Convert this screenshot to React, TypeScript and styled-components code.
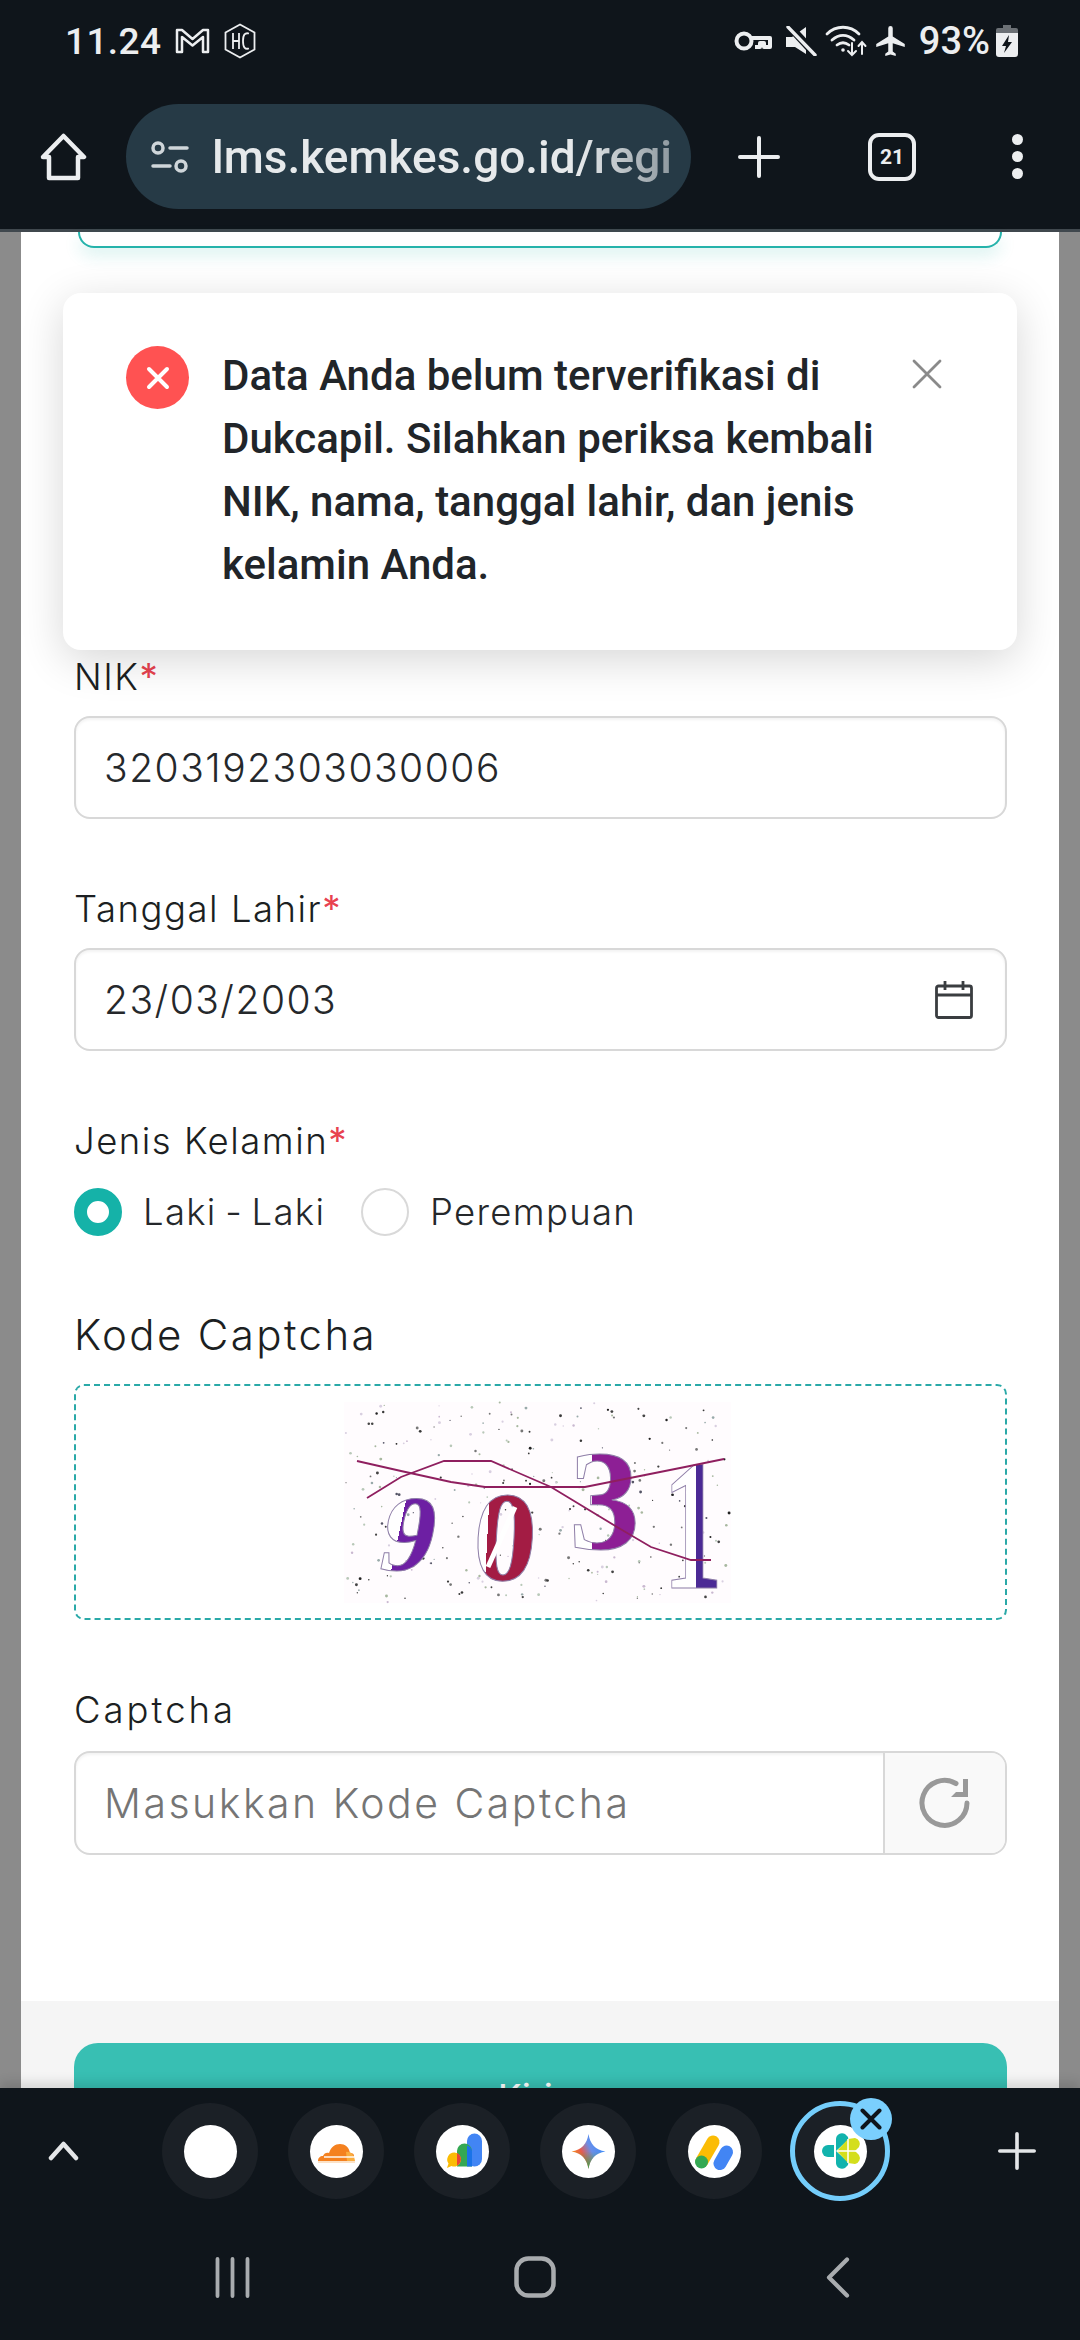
import React from 'react';
import styled, { createGlobalStyle } from 'styled-components';

const GlobalStyle = createGlobalStyle`
  html, body { margin: 0; padding: 0; background: #0f151b; }
  * { box-sizing: border-box; }
`;

const Screen = styled.div`
  width: 1080px;
  height: 2340px;
  display: flex;
  flex-direction: column;
  overflow: hidden;
  font-family: Roboto, "Liberation Sans", sans-serif;
  background: #0f151b;
`;

const TopBar = styled.header`
  height: 232px;
  flex: none;
  background: #0f151b;
  border-bottom: 3px solid #40484e;
  display: flex;
  flex-direction: column;
  color: #eceef0;
`;

const StatusBar = styled.div`
  height: 82px;
  padding: 0 62px 0 65px;
  display: flex;
  align-items: center;
`;

const Clock = styled.span`
  font-size: 37px;
  font-weight: 500;
  letter-spacing: 0.4px;
  margin-right: 14px;
`;

const StatusRight = styled.div`
  margin-left: auto;
  display: flex;
  align-items: center;
  gap: 8px;
`;

const Percent = styled.span`
  font-size: 38px;
  font-weight: 500;
  margin: 0 0 0 5px;
`;

const UrlRow = styled.div`
  height: 105px;
  margin-top: 22px;
  display: flex;
  align-items: center;
  padding-left: 40px;
`;

const UrlPill = styled.div`
  width: 565px;
  height: 105px;
  margin: 0 47px 0 39px;
  border-radius: 53px;
  background: #263a46;
  display: flex;
  align-items: center;
  padding: 0 20px 0 24px;
`;

const UrlText = styled.span`
  margin-left: 22px;
  font-size: 46px;
  font-weight: 500;
  color: #e6e9eb;
  white-space: nowrap;
  overflow: hidden;
  flex: 1;
  -webkit-mask-image: linear-gradient(90deg, #000 80%, rgba(0, 0, 0, 0.55) 100%);
  mask-image: linear-gradient(90deg, #000 80%, rgba(0, 0, 0, 0.55) 100%);
`;

const TabCount = styled.div`
  width: 48px;
  height: 48px;
  margin: 0 88px;
  border: 4px solid #eceef0;
  border-radius: 11px;
  display: flex;
  align-items: center;
  justify-content: center;
  font-size: 21px;
  font-weight: 700;
`;

const Dots = styled.div`
  display: flex;
  flex-direction: column;
  gap: 6px;
  margin-left: 8px;
  i {
    display: block;
    width: 11px;
    height: 11px;
    border-radius: 50%;
    background: #eceef0;
  }
`;

const Page = styled.main`
  flex: 1;
  min-height: 0;
  position: relative;
  background: #8b8b8b;
  padding: 0 21px;
`;

const Panel = styled.div`
  height: 100%;
  background: #fff;
  display: flex;
  flex-direction: column;
  color: #212529;
  font-family: Inter, "Open Sans", sans-serif;
`;

const PrevCard = styled.div`
  height: 16px;
  margin: 0 57px;
  border: 2px solid #26b3ab;
  border-top: none;
  border-radius: 0 0 30px 30px;
  box-shadow: 0 8px 16px rgba(38, 179, 171, 0.16);
`;

const Form = styled.div`
  flex: 1;
  padding: 0 52px 0 53px;
  display: flex;
  flex-direction: column;
`;

const Label = styled.div<{ $top: number; $spacing?: number }>`
  height: 50px;
  line-height: 50px;
  margin-top: ${(p) => p.$top}px;
  font-size: 36.5px;
  font-weight: 300;
  color: #1c1f22;
  letter-spacing: ${(p) => p.$spacing ?? 1.5}px;
  b {
    font-weight: 400;
    color: #e8424f;
  }
`;

const SectionLabel = styled(Label)`
  font-size: 42px;
`;

const Field = styled.div`
  height: 103px;
  margin-top: 14px;
  border: 2px solid #d8d8d8;
  border-radius: 16px;
  padding: 0 32px 0 28px;
  display: flex;
  align-items: center;
  justify-content: space-between;
  font-size: 39px;
  font-weight: 300;
  color: #25282b;
  letter-spacing: 1.5px;
  box-shadow: inset 0 2px 3px rgba(0, 0, 0, 0.05);
`;

const RadioRow = styled.div`
  height: 48px;
  margin-top: 22px;
  display: flex;
  align-items: center;
`;

const Radio = styled.span<{ $on?: boolean }>`
  width: 48px;
  height: 48px;
  flex: none;
  border-radius: 50%;
  background: #fff;
  border: ${(p) => (p.$on ? '13.5px solid #15b2a8' : '2px solid #d9d9d9')};
`;

const RadioText = styled.span<{ $width: number }>`
  width: ${(p) => p.$width}px;
  margin-left: 21px;
  font-size: 36.5px;
  font-weight: 300;
  letter-spacing: 1.3px;
  word-spacing: -3px;
  color: #25282b;
  white-space: nowrap;
`;

const CaptchaBox = styled.div`
  height: 236px;
  margin-top: 24px;
  border: 2px dashed #2aa9a8;
  border-radius: 10px;
  display: flex;
  align-items: center;
  justify-content: center;
  svg {
    display: block;
    margin-left: -6px;
  }
`;

const InputGroup = styled.div`
  height: 104px;
  margin-top: 16px;
  border: 2px solid #d8d8d8;
  border-radius: 16px;
  display: flex;
  overflow: hidden;
  box-shadow: inset 0 2px 3px rgba(0, 0, 0, 0.05);
`;

const Placeholder = styled.div`
  flex: 1;
  padding-left: 28px;
  display: flex;
  align-items: center;
  font-size: 41px;
  font-weight: 300;
  letter-spacing: 2.5px;
  color: #757575;
`;

const Addon = styled.div`
  width: 122px;
  border-left: 2px solid #d8d8d8;
  background: #f9f9f9;
  display: flex;
  align-items: center;
  justify-content: center;
`;

const Footer = styled.div`
  height: 87px;
  flex: none;
  background: #f5f5f5;
  padding: 42px 52px 0 53px;
  overflow: hidden;
`;

const SubmitButton = styled.div`
  height: 106px;
  border-radius: 24px;
  background: #38bfb3;
  color: #fff;
  display: flex;
  align-items: center;
  justify-content: center;
  font-size: 34px;
  font-weight: 500;
`;

const Toast = styled.div`
  position: absolute;
  top: 61px;
  left: 63px;
  width: 954px;
  height: 357px;
  background: #fff;
  border-radius: 18px;
  box-shadow: 0 10px 44px rgba(0, 0, 0, 0.16);
  display: flex;
  align-items: flex-start;
  padding: 51px 0 0 63px;
  font-family: Roboto, "Liberation Sans", sans-serif;
`;

const ToastBadge = styled.span`
  width: 63px;
  height: 63px;
  flex: none;
  margin-top: 2px;
  border-radius: 50%;
  background: #ff5252;
  display: flex;
  align-items: center;
  justify-content: center;
`;

const ToastText = styled.p`
  width: 690px;
  margin: 0 0 0 33px;
  font-size: 42px;
  line-height: 63px;
  font-weight: 500;
  color: #212529;
`;

const ToastClose = styled.span`
  margin-top: 15px;
  flex: none;
  line-height: 0;
`;

const BottomBar = styled.footer`
  height: 252px;
  flex: none;
  background: #0f151b;
  position: relative;
  box-shadow: 0 -6px 10px rgba(0, 0, 0, 0.12);
`;

const TabRow = styled.div`
  height: 126px;
  padding-left: 48px;
  display: flex;
  align-items: center;
`;

const TabList = styled.div`
  margin: 0 110px 0 83px;
  display: flex;
  gap: 30px;
`;

const TabBubble = styled.div<{ $active?: boolean }>`
  width: 96px;
  height: 96px;
  border-radius: 50%;
  background: #1b2026;
  display: flex;
  align-items: center;
  justify-content: center;
  position: relative;
  outline: ${(p) => (p.$active ? '5px solid #74cdfb' : 'none')};
  outline-offset: -3px;
`;

const Favicon = styled.div`
  width: 53px;
  height: 53px;
  border-radius: 50%;
  background: #fff;
  svg {
    display: block;
  }
`;

const CloseBadge = styled.span`
  position: absolute;
  top: -5px;
  right: -4px;
  width: 42px;
  height: 42px;
  border-radius: 50%;
  background: #7acffd;
  display: flex;
  align-items: center;
  justify-content: center;
`;

const NavRow = styled.div`
  height: 126px;
  padding: 0 0 0 215px;
  display: flex;
  align-items: center;
  svg {
    display: block;
  }
`;

const NavHome = styled.span`
  margin: 0 270px 0 264px;
`;

const Required = () => <b>*</b>;

// status bar glyphs
const MailIcon = () => (
  <svg width="35" height="26" viewBox="0 0 35 26" fill="none" stroke="#eceef0" strokeWidth="2.5" strokeLinejoin="round">
    <path d="M2 2h5l10.5 9L28 2h5v22h-5V9l-10.5 8.500L7 9v15H2z" />
  </svg>
);

const HexIcon = () => (
  <svg width="32" height="36" viewBox="0 0 32 36" fill="none" stroke="#eceef0" strokeWidth="1.800" style={{ marginLeft: 14 }}>
    <path d="M16 1.500 30.500 9.500v17L16 34.500 1.500 26.500v-17z" />
    <path d="M9 10v16M15 10v16M9 18h6M25 10.500c-4-1-6 1-6 7.500s2 8.500 6 7.500" />
  </svg>
);

const KeyIcon = () => (
  <svg width="38" height="22" viewBox="0 0 38 22" fill="none" stroke="#eceef0" strokeWidth="4">
    <circle cx="10" cy="11" r="7.500" />
    <path d="M17 8h19v9h-6v-4h-4v4h-5" strokeLinejoin="round" fill="none" />
  </svg>
);

const MuteIcon = () => (
  <svg width="31" height="30" viewBox="0 0 31 30" style={{ marginLeft: 6 }}>
    <path d="M0 11h6L20 1v27L9 21H0z" fill="#eceef0" />
    <path d="M4 1l26 28" stroke="#0f151b" strokeWidth="8" />
    <path d="M2 1l27 28" stroke="#eceef0" strokeWidth="3.400" strokeLinecap="round" />
  </svg>
);

const WifiIcon = () => (
  <svg width="42" height="32" viewBox="0 0 42 32" fill="none" stroke="#eceef0" strokeWidth="2.800" strokeLinecap="round">
    <path d="M2 9C11 0 25 0 34 9M7 15c7-6 15-6 22 0M12 20c4-3 8-3 12 0" />
    <circle cx="18" cy="25" r="1.800" fill="#eceef0" stroke="none" />
    <path d="M27 18v12M23 26l4 4 4-4M37 29V17M33.500 21l3.500-4 3.500 4" strokeWidth="2" />
  </svg>
);

const PlaneIcon = () => (
  <svg width="31" height="30" viewBox="2 2 20 20" fill="#eceef0">
    <path d="M21 16v-2l-8-5V3.500a1.500 1.500 0 0 0-3 0V9l-8 5v2l8-2.500V19l-2 1.500V22l3.500-1 3.500 1v-1.500L13 19v-5.500z" transform="translate(0.500 0)" />
  </svg>
);

const BatteryIcon = () => (
  <svg width="22" height="32" viewBox="0 0 22 32" style={{ marginLeft: -2 }}>
    <path d="M7 0h8v3H7z" fill="#6b7075" />
    <rect y="3" width="22" height="7" rx="2" fill="#6b7075" />
    <path d="M0 8h22v21a3 3 0 0 1-3 3H3a3 3 0 0 1-3-3z" fill="#eceef0" />
    <path d="M13 10 6 21h4l-2 7 8-11h-4z" fill="#0f151b" />
  </svg>
);

// browser chrome glyphs
const HomeIcon = () => (
  <svg width="47" height="48" viewBox="0 0 47 48" fill="none" stroke="#eceef0" strokeWidth="4.500" strokeLinejoin="round">
    <path d="M23.500 3 44 24h-6v21H9V24H3z" />
  </svg>
);

const TuneIcon = () => (
  <svg width="40" height="34" viewBox="0 0 40 34" fill="none" stroke="#cfd6da" strokeWidth="3.500" strokeLinecap="round">
    <circle cx="8" cy="8" r="5" />
    <path d="M20 8h17M3 26h17" />
    <circle cx="31" cy="26" r="5" />
  </svg>
);

const PlusIcon = ({ size, color }: { size: number; color: string }) => (
  <svg width={size} height={size} viewBox="0 0 42 42" fill="none" stroke={color} strokeWidth="4" strokeLinecap="round">
    <path d="M21 2v38M2 21h38" />
  </svg>
);

const CalendarIcon = () => (
  <svg width="38" height="38" viewBox="0 0 38 38" fill="none" stroke="#3a3d40" strokeWidth="2.800">
    <rect x="1.500" y="5" width="35" height="31.500" rx="2" />
    <path d="M1.500 14h35M10 0v9M28 0v9" />
  </svg>
);

const RefreshIcon = () => (
  <svg width="54" height="54" viewBox="0 0 54 54" fill="none" stroke="#999" strokeWidth="5">
    <path d="M49 27A22.500 22.500 0 1 1 38 7.500" strokeLinecap="round" />
    <path d="M50 3v18H33l5-5h7V3z" fill="#999" stroke="none" />
  </svg>
);

// captcha picture, digits stay real text
function noiseDots() {
  const dots: { x: number; y: number; r: number; c: string }[] = [];
  const colors = ['#3a3a3a', '#222', '#777', '#9aa', '#556', '#a8b8a0', '#444', '#c9b8d0', '#d8cfe0', '#b8c8b8'];
  let s = 90317;
  const next = () => {
    s = (s * 1103515245 + 12345) & 0x7fffffff;
    return s / 0x7fffffff;
  };
  for (let i = 0; i < 300; i++) {
    dots.push({
      x: next() * 387,
      y: next() * 201,
      r: 0.6 + next() * 0.9,
      c: colors[Math.floor(next() * colors.length)],
    });
  }
  return dots;
}

const HalfFill = ({ id, color, cut }: { id: string; color: string; cut: number }) => (
  <linearGradient id={id} x1="0" y1="0" x2="1" y2="0">
    <stop offset={cut} stopColor="#fff" />
    <stop offset={cut} stopColor={color} />
  </linearGradient>
);

const CaptchaPicture = () => (
  <svg width="387" height="201" viewBox="0 0 387 201" overflow="visible">
    <defs>
      <HalfFill id="cap9" color="#6d1fa3" cut={0.3} />
      <HalfFill id="cap0" color="#a31c44" cut={0.22} />
      <HalfFill id="cap3" color="#8d1f95" cut={0.32} />
      <HalfFill id="cap1" color="#4b2a95" cut={0.56} />
    </defs>
    <rect width="387" height="201" fill="#fffcfe" />
    {noiseDots().map((d, i) => (
      <circle key={i} cx={d.x} cy={d.y} r={d.r} fill={d.c} />
    ))}
    <g fontFamily="'Liberation Serif', serif" fontWeight="700" stroke="#8f7fa8" strokeWidth="1">
      <text x="0" y="0" fontSize="108" fill="url(#cap9)" transform="translate(31 168) skewX(-12)">9</text>
      <text x="0" y="0" fontSize="128" fill="url(#cap0)" transform="translate(127 178) skewX(-3)">0</text>
      <text x="0" y="0" fontSize="142" fill="url(#cap3)" transform="translate(225 147)">3</text>
      <text x="0" y="0" fontSize="170" fill="url(#cap1)" transform="translate(318 186) scale(0.72 1.100)">1</text>
    </g>
    <path d="M144 165 171 105" stroke="#fff" strokeWidth="5" />
    <polyline
      points="13,59 57,69 107,80 141,85 241,85 291,75 341,65 380,57"
      fill="none"
      stroke="#8f1f5f"
      strokeWidth="1.800"
    />
    <polyline
      points="23,96 57,75 100,59 147,59 207,85 273,125 307,145 347,158 367,158"
      fill="none"
      stroke="#8f1f5f"
      strokeWidth="1.800"
    />
  </svg>
);

// tab strip favicons
const CloudflareMark = () => (
  <svg width="53" height="53" viewBox="0 0 53 53">
    <path d="M8 36c0-3 2-5 5-5 1-3 4-4 6-3 2-6 6-9 11-9 5 0 9 3 10 9 3 0 4 1 4 3 0 2 0 3-1 5z" fill="#f48120" />
    <path d="M36 27c4-1 8 2 9 9H37z" fill="#faad3f" />
    <path d="M14 32h30" stroke="#fff" strokeWidth="1.400" />
    <path d="M8 37h37" stroke="#f9c58f" strokeWidth="1.200" />
  </svg>
);

const AdsMark = () => (
  <svg width="53" height="53" viewBox="0 0 53 53">
    <rect x="31" y="8.500" width="15" height="33" rx="7.500" fill="#4285f4" />
    <path d="M21 26a7.500 7.500 0 0 1 15 0v15.500H21z" fill="#34a853" />
    <path d="M31 20.500a7.500 7.500 0 0 1 5 5.500v15.500h-5z" fill="#1a73e8" />
    <path d="M18.500 27.500a7 7 0 1 1-3 13.500L11 43l1.500-4.500a7 7 0 0 1 6-11z" fill="#fbbc04" />
    <path d="M21 28a7 7 0 0 1 0 12.500z" fill="#ea4335" />
  </svg>
);

const GeminiMark = () => (
  <svg width="53" height="53" viewBox="0 0 53 53">
    <defs>
      <linearGradient id="gem" x1="0" y1="0.800" x2="1" y2="0.300">
        <stop offset="0" stopColor="#f9ab00" />
        <stop offset="0.350" stopColor="#ea5a4c" />
        <stop offset="0.600" stopColor="#6a8ee8" />
        <stop offset="1" stopColor="#2f8cff" />
      </linearGradient>
      <linearGradient id="gemb" x1="0" y1="0" x2="0" y2="1">
        <stop offset="0.500" stopColor="#34a853" stopOpacity="0" />
        <stop offset="1" stopColor="#34a853" />
      </linearGradient>
    </defs>
    <path d="M26.500 9c1.500 10 7 16 17 17.500-10 1.500-15.500 7.500-17 17.500-1.500-10-7-16-17-17.500 10-1.500 15.500-7.500 17-17.500z" fill="url(#gem)" />
    <path d="M26.500 9c1.500 10 7 16 17 17.500-10 1.500-15.500 7.500-17 17.500-1.500-10-7-16-17-17.500 10-1.500 15.500-7.500 17-17.500z" fill="url(#gemb)" />
  </svg>
);

const AdsenseMark = () => (
  <svg width="53" height="53" viewBox="0 0 53 53" fill="none" strokeLinecap="round">
    <path d="M38.500 27 32 38.500" stroke="#4285f4" strokeWidth="13" />
    <path d="M25 17 14 36" stroke="#fbbc04" strokeWidth="13" />
    <circle cx="13.500" cy="37" r="6.500" fill="#34a853" />
  </svg>
);

const SehatMark = () => (
  <svg width="53" height="53" viewBox="0 0 53 53">
    <path d="M20 20h-6a6 6 0 0 0 0 12h6z" fill="#12b3ad" />
    <path d="M22 26V14a6 6 0 0 1 9-5l3 3a6 6 0 0 1 0 3z" fill="#12b3ad" />
    <path d="M22 26v12a6 6 0 0 0 9 5l3-3a6 6 0 0 0 0-3z" fill="#12b3ad" />
    <path d="M23 26l11-12 7-1a6 6 0 0 1 4 9l-4 4 4 4a6 6 0 0 1-4 9l-7-1z" fill="#d4de1c" />
    <path d="M23 26h20M34 14v24" stroke="#fff" strokeWidth="1.500" />
  </svg>
);

export default function App() {
  return (
    <Screen>
      <GlobalStyle />
      <TopBar>
        <StatusBar>
          <Clock>11.24</Clock>
          <MailIcon />
          <HexIcon />
          <StatusRight>
            <KeyIcon />
            <MuteIcon />
            <WifiIcon />
            <PlaneIcon />
            <Percent>93%</Percent>
            <BatteryIcon />
          </StatusRight>
        </StatusBar>
        <UrlRow>
          <HomeIcon />
          <UrlPill>
            <TuneIcon />
            <UrlText>lms.kemkes.go.id/regi</UrlText>
          </UrlPill>
          <PlusIcon size={42} color="#eceef0" />
          <TabCount>21</TabCount>
          <Dots>
            <i />
            <i />
            <i />
          </Dots>
        </UrlRow>
      </TopBar>

      <Page>
        <Panel>
          <PrevCard />
          <Form>
            <Label $top={404}>
              NIK
              <Required />
            </Label>
            <Field>3203192303030006</Field>
            <Label $top={65}>
              Tanggal Lahir
              <Required />
            </Label>
            <Field>
              23/03/2003
              <CalendarIcon />
            </Field>
            <Label $top={65}>
              Jenis Kelamin
              <Required />
            </Label>
            <RadioRow>
              <Radio $on />
              <RadioText $width={218}>Laki - Laki</RadioText>
              <Radio />
              <RadioText $width={230}>Perempuan</RadioText>
            </RadioRow>
            <SectionLabel $top={74} $spacing={2.4}>
              Kode Captcha
            </SectionLabel>
            <CaptchaBox>
              <CaptchaPicture />
            </CaptchaBox>
            <Label $top={65} $spacing={3}>
              Captcha
            </Label>
            <InputGroup>
              <Placeholder>Masukkan Kode Captcha</Placeholder>
              <Addon>
                <RefreshIcon />
              </Addon>
            </InputGroup>
          </Form>
          <Footer>
            <SubmitButton>Kirim</SubmitButton>
          </Footer>
        </Panel>

        <Toast>
          <ToastBadge>
            <svg width="24" height="24" viewBox="0 0 24 24" fill="none" stroke="#fff" strokeWidth="4" strokeLinecap="round">
              <path d="M3 3l18 18M21 3 3 21" />
            </svg>
          </ToastBadge>
          <ToastText>
            Data Anda belum terverifikasi di Dukcapil. Silahkan periksa kembali NIK, nama, tanggal lahir, dan jenis
            kelamin Anda.
          </ToastText>
          <ToastClose>
            <svg width="30" height="30" viewBox="0 0 30 30" fill="none" stroke="#8a8a8a" strokeWidth="2.800" strokeLinecap="round">
              <path d="M2 2l26 26M28 2 2 28" />
            </svg>
          </ToastClose>
        </Toast>
      </Page>

      <BottomBar>
        <TabRow>
          <svg width="31" height="20" viewBox="0 0 31 20" fill="none" stroke="#e4e6e8" strokeWidth="4.500" strokeLinecap="round" strokeLinejoin="round">
            <path d="M3 17 15.500 3 28 17" />
          </svg>
          <TabList>
            <TabBubble>
              <Favicon />
            </TabBubble>
            <TabBubble>
              <Favicon>
                <CloudflareMark />
              </Favicon>
            </TabBubble>
            <TabBubble>
              <Favicon>
                <AdsMark />
              </Favicon>
            </TabBubble>
            <TabBubble>
              <Favicon>
                <GeminiMark />
              </Favicon>
            </TabBubble>
            <TabBubble>
              <Favicon>
                <AdsenseMark />
              </Favicon>
            </TabBubble>
            <TabBubble $active>
              <Favicon>
                <SehatMark />
              </Favicon>
              <CloseBadge>
                <svg width="22" height="22" viewBox="0 0 22 22" fill="none" stroke="#0f151b" strokeWidth="4" strokeLinecap="round">
                  <path d="M2.500 2.500l17 17M19.500 2.500l-17 17" />
                </svg>
              </CloseBadge>
            </TabBubble>
          </TabList>
          <PlusIcon size={38} color="#e4e6e8" />
        </TabRow>
        <NavRow>
          <svg width="35" height="41" viewBox="0 0 35 41" fill="none" stroke="#a9acaf" strokeWidth="3.800" strokeLinecap="round">
            <path d="M2.500 2v37M17.500 2v37M32.500 2v37" />
          </svg>
          <NavHome>
            <svg width="42" height="42" viewBox="0 0 42 42" fill="none" stroke="#a9acaf" strokeWidth="4.500">
              <rect x="2.500" y="2.500" width="37" height="37" rx="12" />
            </svg>
          </NavHome>
          <svg width="24" height="41" viewBox="0 0 24 41" fill="none" stroke="#a9acaf" strokeWidth="4.200" strokeLinecap="round" strokeLinejoin="round">
            <path d="M21 2.500 3 20.500l18 18" />
          </svg>
        </NavRow>
      </BottomBar>
    </Screen>
  );
}
